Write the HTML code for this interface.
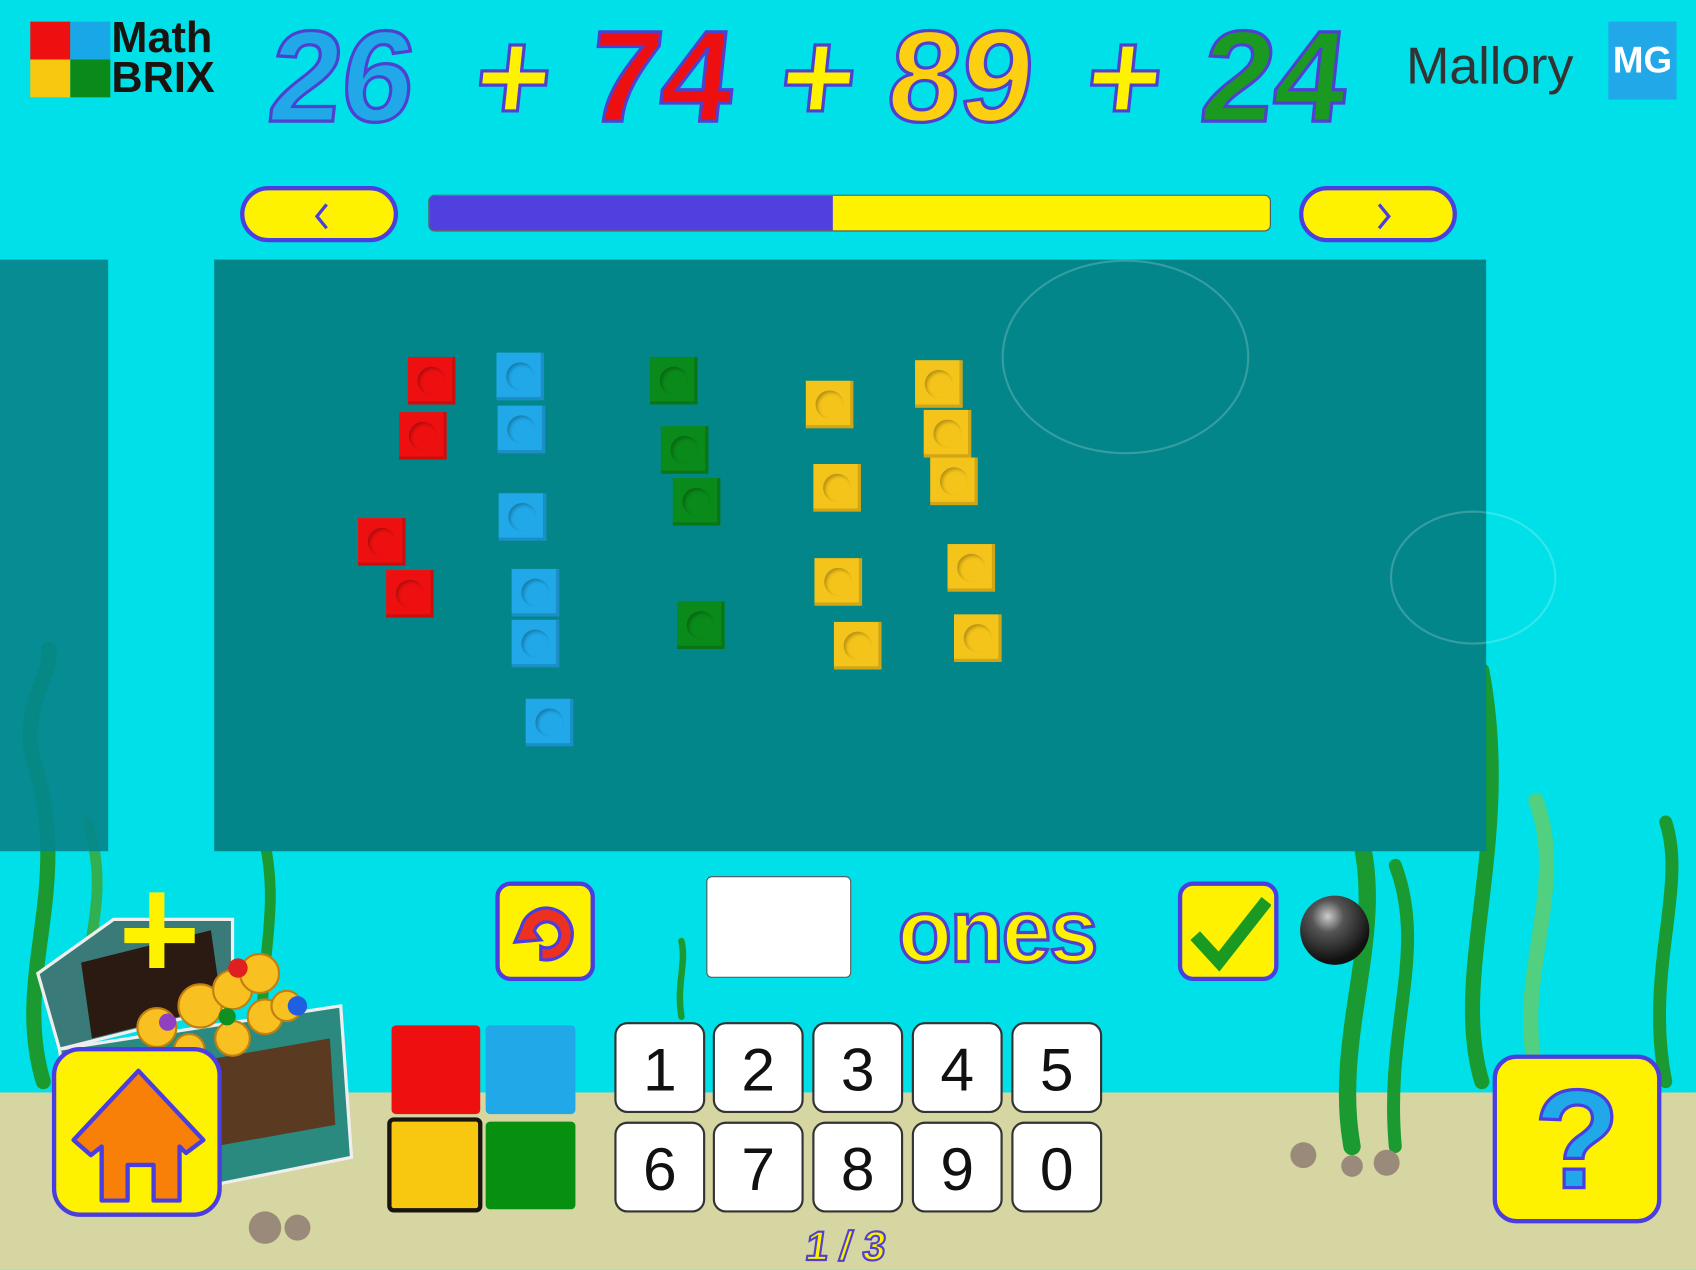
<!DOCTYPE html>
<html><head><meta charset="utf-8"><style>
html,body{margin:0;padding:0;overflow:hidden;width:1696px;height:1270px;background:#00e0e8}
#s{position:absolute;left:0;top:0;width:1568px;height:1174px;transform:scale(1.08163);transform-origin:0 0;background:#00e0e8;overflow:hidden;font-family:"Liberation Sans",sans-serif}
.a{position:absolute}
.b{position:absolute;width:44px;height:44px;box-shadow:inset -3px -3px 0 rgba(0,0,0,.15)}
.b:after{content:"";position:absolute;left:9px;top:9px;width:26px;height:26px;border-radius:50%;box-shadow:inset 2px 2px 3px rgba(0,0,0,.25)}
.r{background:#ee1010}.u{background:#20a8e8}.g{background:#0a8a1a}.y{background:#f5c41a}
.eq{position:absolute;top:2px;font-size:120px;font-weight:bold;-webkit-text-stroke:3px #5040d0;transform:skewX(-6deg)}
.k{position:absolute;width:84px;height:84px;background:#fff;border:2px solid #333;border-radius:12px;box-sizing:border-box;text-align:center;font-size:56px;line-height:84px;color:#111}
.pill{position:absolute;width:146px;height:52px;background:#fff200;border:4px solid #4a3ee0;border-radius:28px;box-sizing:border-box}
.sq{position:absolute;background:#fff200;border:4px solid #4a3ee0;border-radius:14px;box-sizing:border-box}
</style></head><body><div id="s">
<div class="a" style="left:0;top:1010px;width:1568px;height:170px;background:#d6d6a2"></div>
<svg class="a" style="left:0;top:0" width="1568" height="1174">
<g fill="none" stroke-linecap="round">
<path d="M40 1000 C10 900 70 820 30 700 C20 650 50 620 45 600" stroke="#1a9a30" stroke-width="14"/>
<path d="M80 1000 C60 900 110 840 80 760" stroke="#30b050" stroke-width="10"/>
<path d="M1250 1060 C1230 950 1290 850 1250 750 C1240 720 1260 690 1245 670" stroke="#1a9a30" stroke-width="16"/>
<path d="M1290 1060 C1280 950 1320 880 1290 800" stroke="#1a9a30" stroke-width="12"/>
<path d="M1370 1000 C1340 900 1400 780 1370 620" stroke="#1a9a30" stroke-width="14"/>
<path d="M1420 990 C1400 900 1450 820 1420 740" stroke="#50d080" stroke-width="14"/>
<path d="M1540 1000 C1520 900 1560 820 1540 760" stroke="#1a9a30" stroke-width="12"/>
<path d="M245 980 C235 900 260 850 245 780" stroke="#1a9a30" stroke-width="10"/>
<path d="M630 940 C625 910 635 890 630 870" stroke="#1a9a30" stroke-width="6"/>
</g>
<g fill="#9a8a7a"><circle cx="1205" cy="1068" r="12"/><circle cx="1250" cy="1078" r="10"/><circle cx="1282" cy="1075" r="12"/><circle cx="245" cy="1135" r="15"/><circle cx="275" cy="1135" r="12"/></g>
</svg>
<div class="a" style="left:0;top:240px;width:100px;height:547px;background:#05868c;opacity:.93"></div>
<div class="a" style="left:198px;top:240px;width:1176px;height:547px;background:#02868a"></div>
<div class="a" style="left:926px;top:240px;width:225px;height:176px;border-radius:50%;border:2px solid rgba(255,255,255,.2)"></div>
<div class="a" style="left:1285px;top:472px;width:150px;height:120px;border-radius:50%;border:2px solid rgba(255,255,255,.2)"></div>
<div class="a" style="left:28px;top:20px;width:37px;height:35px;background:#ee1010"></div>
<div class="a" style="left:65px;top:20px;width:37px;height:35px;background:#18a8e8"></div>
<div class="a" style="left:28px;top:55px;width:37px;height:35px;background:#f8c810"></div>
<div class="a" style="left:65px;top:55px;width:37px;height:35px;background:#0a8a1a"></div>
<div class="a" style="left:103px;top:17px;font-size:40px;font-weight:bold;color:#1a1410;line-height:37px">Math<br>BRIX</div>
<div class="eq" style="left:250px;color:#20a8e8">26</div>
<div class="eq" style="left:440px;color:#fff200">+</div>
<div class="eq" style="left:545px;color:#ee1010">74</div>
<div class="eq" style="left:722px;color:#fff200">+</div>
<div class="eq" style="left:822px;color:#fcd010">89</div>
<div class="eq" style="left:1005px;color:#fff200">+</div>
<div class="eq" style="left:1112px;color:#1a9a20">24</div>
<div class="a" style="left:1300px;top:34px;font-size:48px;color:#333">Mallory</div>
<div class="a" style="left:1487px;top:20px;width:63px;height:72px;background:#20a8e8;color:#fff;font-size:34px;font-weight:bold;text-align:center;line-height:72px">MG</div>
<div class="pill" style="left:222px;top:172px"><svg class="a" style="left:62px;top:10px" width="20" height="28"><path d="M14 3 L5 14 L14 25" stroke="#4a3ee0" stroke-width="3" fill="none"/></svg></div>
<div class="pill" style="left:1201px;top:172px"><svg class="a" style="left:64px;top:10px" width="20" height="28"><path d="M6 3 L15 14 L6 25" stroke="#4a3ee0" stroke-width="3" fill="none"/></svg></div>
<div class="a" style="left:396px;top:180px;width:779px;height:34px;border-radius:6px;background:#fff200;border:1px solid #555;box-sizing:border-box;overflow:hidden"><div style="width:373px;height:34px;background:#5040e0"></div></div>
<div class="b r" style="left:377px;top:330px"></div><div class="b r" style="left:369px;top:381px"></div><div class="b r" style="left:331px;top:479px"></div><div class="b r" style="left:357px;top:527px"></div>
<div class="b u" style="left:459px;top:326px"></div><div class="b u" style="left:460px;top:375px"></div><div class="b u" style="left:461px;top:456px"></div><div class="b u" style="left:473px;top:526px"></div><div class="b u" style="left:473px;top:573px"></div><div class="b u" style="left:486px;top:646px"></div>
<div class="b g" style="left:601px;top:330px"></div><div class="b g" style="left:611px;top:394px"></div><div class="b g" style="left:622px;top:442px"></div><div class="b g" style="left:626px;top:556px"></div>
<div class="b y" style="left:745px;top:352px"></div><div class="b y" style="left:752px;top:429px"></div><div class="b y" style="left:753px;top:516px"></div><div class="b y" style="left:771px;top:575px"></div><div class="b y" style="left:846px;top:333px"></div><div class="b y" style="left:854px;top:379px"></div><div class="b y" style="left:860px;top:423px"></div><div class="b y" style="left:876px;top:503px"></div><div class="b y" style="left:882px;top:568px"></div>
<div class="sq" style="left:458px;top:815px;width:92px;height:92px"><svg class="a" style="left:8px;top:8px" width="70" height="70"><path d="M12 30 A24 24 0 1 1 30 60 L30 48 A12 12 0 1 0 24 34 L30 42 L6 44 Z" fill="#ee3020" stroke="#4a3ee0" stroke-width="3"/></svg></div>
<div class="a" style="left:653px;top:810px;width:132px;height:92px;background:#fff;border:1px solid #555;border-radius:5px"></div>
<div class="a" style="left:830px;top:812px;font-size:82px;font-weight:bold;color:#fff200;-webkit-text-stroke:3px #5040d0;line-height:100px;letter-spacing:-2px">ones</div>
<div class="sq" style="left:1089px;top:815px;width:93px;height:92px"><svg class="a" style="left:6px;top:6px" width="76" height="76"><path d="M6 40 L28 64 L72 8" stroke="#1a9a20" stroke-width="12" fill="none"/></svg></div>
<div class="a" style="left:1202px;top:828px;width:64px;height:64px;border-radius:50%;background:radial-gradient(circle at 40% 30%,#ccc 0,#555 25%,#111 70%)"></div>
<div class="a" style="left:362px;top:948px;width:82px;height:82px;background:#ee1010;border-radius:4px"></div>
<div class="a" style="left:449px;top:948px;width:83px;height:82px;background:#20a8e8;border-radius:4px"></div>
<div class="a" style="left:358px;top:1033px;width:88px;height:88px;background:#f8c810;border:4px solid #1a1410;border-radius:6px;box-sizing:border-box"></div>
<div class="a" style="left:449px;top:1037px;width:83px;height:81px;background:#079010;border-radius:4px"></div>
<div class="k" style="left:568px;top:945px">1</div><div class="k" style="left:659px;top:945px">2</div><div class="k" style="left:751px;top:945px">3</div><div class="k" style="left:843px;top:945px">4</div><div class="k" style="left:935px;top:945px">5</div>
<div class="k" style="left:568px;top:1037px">6</div><div class="k" style="left:659px;top:1037px">7</div><div class="k" style="left:751px;top:1037px">8</div><div class="k" style="left:843px;top:1037px">9</div><div class="k" style="left:935px;top:1037px">0</div>
<div class="a" style="left:745px;top:1132px;font-size:38px;font-weight:bold;color:#fff200;-webkit-text-stroke:2px #5040d0;transform:skewX(-8deg)">1 / 3</div>
<svg class="a" style="left:15px;top:820px" width="320" height="300">
<path d="M20 80 L90 30 L200 30 L200 110 L40 150 Z" fill="#3a7a78" stroke="#eee" stroke-width="3"/>
<path d="M60 70 L180 40 L190 110 L70 140 Z" fill="#2a1a12"/>
<path d="M40 150 L300 110 L310 250 L60 300 Z" fill="#2a8a80" stroke="#eee" stroke-width="3"/>
<path d="M60 180 L290 140 L295 220 L70 260 Z" fill="#5a3a20"/>
<g fill="#f8c020" stroke="#c08010" stroke-width="2"><circle cx="130" cy="130" r="18"/><circle cx="170" cy="110" r="20"/><circle cx="200" cy="95" r="18"/><circle cx="225" cy="80" r="18"/><circle cx="230" cy="120" r="16"/><circle cx="200" cy="140" r="16"/><circle cx="250" cy="110" r="14"/><circle cx="160" cy="150" r="14"/></g>
<circle cx="205" cy="75" r="9" fill="#e02020"/><circle cx="195" cy="120" r="8" fill="#109020"/><circle cx="260" cy="110" r="9" fill="#2060e0"/><circle cx="140" cy="125" r="8" fill="#9040c0"/>
<path d="M130 5 V75 M100 45 H165" stroke="#fff200" stroke-width="14"/>
</svg>
<div class="sq" style="left:48px;top:968px;width:157px;height:157px;border-radius:26px"><svg class="a" style="left:6px;top:10px" width="140" height="130"><path d="M70 8 L130 72 L114 84 L108 78 L108 128 L84 128 L84 95 L60 95 L60 128 L36 128 L36 78 L26 86 L10 72 Z" fill="#f88008" stroke="#4a3ee0" stroke-width="4" stroke-linejoin="round"/></svg></div>
<div class="sq" style="left:1380px;top:975px;width:156px;height:156px;border-radius:22px"><div class="a" style="left:0;top:0;width:148px;text-align:center;font-size:130px;font-weight:bold;line-height:148px;color:#20a8e8;-webkit-text-stroke:3px #4a3ee0">?</div></div>
</div></body></html>
